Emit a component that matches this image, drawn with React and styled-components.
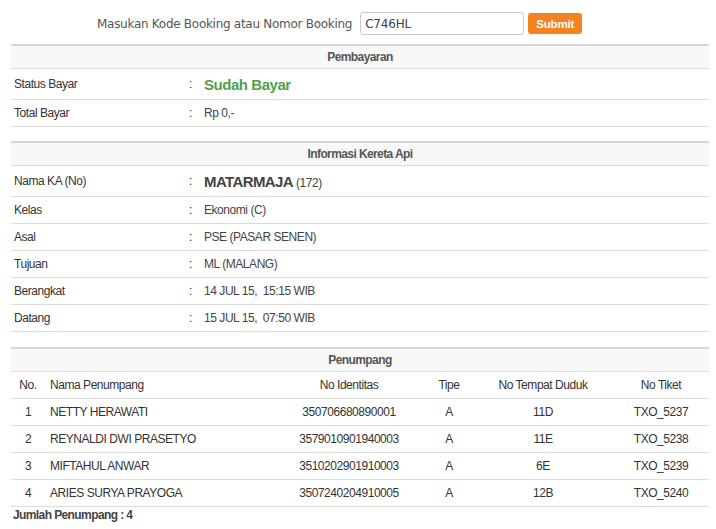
import React from "react";
import styled, { createGlobalStyle } from "styled-components";

const GlobalStyle = createGlobalStyle`
  html, body { margin: 0; padding: 0; background: #fff; }
  body { font-family: "Liberation Sans", Arial, sans-serif; color: #333; }
`;

const Page = styled.div`
  width: 698px;
  padding: 12px 0 0 11px;
`;

const SearchBar = styled.form`
  display: flex;
  align-items: center;
  padding-left: 86px;
  height: 23px;
  margin: 0 0 9px 0;
`;

const SearchLabel = styled.label`
  font-family: "DejaVu Sans", Verdana, sans-serif;
  font-size: 12px;
  letter-spacing: -0.28px;
  color: #555;
  margin-right: 8px;
`;

const SearchInput = styled.input`
  box-sizing: border-box;
  width: 164px;
  height: 23px;
  border: 1px solid #ccc;
  border-radius: 3px;
  padding: 0 4px;
  font-family: "DejaVu Sans", Verdana, sans-serif;
  font-size: 12px;
  letter-spacing: -0.2px;
  color: #444;
  outline: none;
`;

const SubmitButton = styled.button`
  box-sizing: border-box;
  margin-left: 4px;
  width: 54px;
  height: 21px;
  border: none;
  border-radius: 3px;
  background: #f5821f;
  color: #fff;
  font-family: "Liberation Sans", Arial, sans-serif;
  font-weight: bold;
  font-size: 11.5px;
  letter-spacing: -0.2px;
  padding: 0;
`;

const Section = styled.section`
  margin-top: ${(p) => p.$gap || 0}px;
`;

const SectionHeader = styled.div`
  border-top: 2px solid #d4d4d4;
  border-bottom: 1px solid #dcdcdc;
  background: #f8f8f8;
  height: 22px;
  line-height: 22px;
  text-align: center;
  font-weight: bold;
  font-size: 12px;
  letter-spacing: -0.6px;
  color: #555;
`;

const InfoRow = styled.div`
  display: grid;
  grid-template-columns: 175px 15px 1fr;
  align-items: center;
  height: ${(p) => (p.$tall ? 30 : 26)}px;
  border-bottom: 1px solid #dcdcdc;
  font-size: 12px;
  letter-spacing: -0.45px;
`;

const Cell = styled.div`
  padding: 0 3px;
  white-space: pre;
  color: ${(p) => p.$color || "#333"};
`;

const StatusText = styled.span`
  font-size: 15px;
  font-weight: bold;
  color: #4f9f4b;
  letter-spacing: -0.45px;
`;

const TrainName = styled.span`
  font-size: 15px;
  font-weight: bold;
  color: #444;
  letter-spacing: -0.6px;
`;

const TrainNo = styled.span`
  font-size: 12px;
  color: #444;
  margin-left: 3px;
`;

const PassengerRow = styled.div`
  display: grid;
  grid-template-columns: 34px 228px 152px 48px 140px 96px;
  align-items: center;
  height: 26px;
  border-bottom: 1px solid #dcdcdc;
  font-size: 12px;
  letter-spacing: -0.45px;
  color: #333;
`;

const PCell = styled.div`
  text-align: ${(p) => p.$align || "center"};
  padding-left: ${(p) => (p.$align === "left" ? 5 : 0)}px;
  white-space: nowrap;
`;

const Total = styled.div`
  padding: 1px 0 0 2px;
  font-size: 12px;
  font-weight: bold;
  letter-spacing: -0.6px;
  color: #444;
`;

const infoRows = [
  { label: "Kelas", value: "Ekonomi (C)" },
  { label: "Asal", value: "PSE (PASAR SENEN)" },
  { label: "Tujuan", value: "ML (MALANG)" },
  { label: "Berangkat", value: "14 JUL 15,  15:15 WIB" },
  { label: "Datang", value: "15 JUL 15,  07:50 WIB" },
];

const passengers = [
  ["1", "NETTY HERAWATI", "350706680890001", "A", "11D", "TXO_5237"],
  ["2", "REYNALDI DWI PRASETYO", "3579010901940003", "A", "11E", "TXO_5238"],
  ["3", "MIFTAHUL ANWAR", "3510202901910003", "A", "6E", "TXO_5239"],
  ["4", "ARIES SURYA PRAYOGA", "3507240204910005", "A", "12B", "TXO_5240"],
];

const headers = ["No.", "Nama Penumpang", "No Identitas", "Tipe", "No Tempat Duduk", "No Tiket"];

export default function App() {
  return (
    <>
      <GlobalStyle />
      <Page>
        <SearchBar onSubmit={(e) => e.preventDefault()}>
          <SearchLabel>Masukan Kode Booking atau Nomor Booking</SearchLabel>
          <SearchInput defaultValue="C746HL" />
          <SubmitButton type="submit">Submit</SubmitButton>
        </SearchBar>

        <Section>
          <SectionHeader>Pembayaran</SectionHeader>
          <InfoRow $tall>
            <Cell>Status Bayar</Cell>
            <Cell>:</Cell>
            <Cell>
              <StatusText>Sudah Bayar</StatusText>
            </Cell>
          </InfoRow>
          <InfoRow>
            <Cell>Total Bayar</Cell>
            <Cell>:</Cell>
            <Cell $color="#444">Rp 0,-</Cell>
          </InfoRow>
        </Section>

        <Section $gap={14}>
          <SectionHeader>Informasi Kereta Api</SectionHeader>
          <InfoRow $tall>
            <Cell>Nama KA (No)</Cell>
            <Cell>:</Cell>
            <Cell>
              <TrainName>MATARMAJA</TrainName>
              <TrainNo>(172)</TrainNo>
            </Cell>
          </InfoRow>
          {infoRows.map((r) => (
            <InfoRow key={r.label}>
              <Cell>{r.label}</Cell>
              <Cell>:</Cell>
              <Cell $color="#444">{r.value}</Cell>
            </InfoRow>
          ))}
        </Section>

        <Section $gap={15}>
          <SectionHeader>Penumpang</SectionHeader>
          <PassengerRow>
            {headers.map((h, i) => (
              <PCell key={h} $align={i === 1 ? "left" : "center"}>
                {h}
              </PCell>
            ))}
          </PassengerRow>
          {passengers.map((p) => (
            <PassengerRow key={p[0]}>
              {p.map((v, i) => (
                <PCell key={i} $align={i === 1 ? "left" : "center"}>
                  {v}
                </PCell>
              ))}
            </PassengerRow>
          ))}
          <Total>Jumlah Penumpang : 4</Total>
        </Section>
      </Page>
    </>
  );
}
